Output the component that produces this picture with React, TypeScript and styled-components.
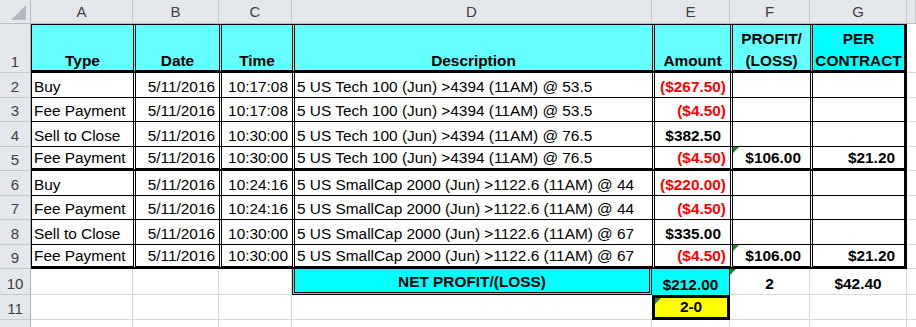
import * as React from "react";
import styled, { createGlobalStyle } from "styled-components";

type Edge = "thin" | "double" | "thick" | "grid" | "none";
type Align = "left" | "right" | "center";

const GlobalStyle = createGlobalStyle`
  html, body {
    margin: 0;
    padding: 0;
    background: #ffffff;
  }
  body {
    font-family: "Liberation Sans", Arial, sans-serif;
    overflow: hidden;
  }
`;

const edge = (b?: Edge) => {
  switch (b) {
    case "thin":
      return "1px solid #000000";
    case "double":
      return "3px double #000000";
    case "thick":
      return "3px solid #000000";
    case "grid":
      return "1px solid #d9d9d9";
    default:
      return "none";
  }
};

const Sheet = styled.div`
  display: grid;
  grid-template-columns: 31px 102px 86px 73px 360px 78px 80px 97px 1fr;
  grid-template-rows: 24px 49px 25px 24px 25px 24px 25px 24px 25px 24px 26px 25px 25px;
  width: 916px;
  height: 327px;
  overflow: hidden;
`;

const Corner = styled.div`
  box-sizing: border-box;
  background: #e4e7eb;
  border-right: 1px solid #b9bdc3;
  border-bottom: 1px solid #b9bdc3;
  display: flex;
`;

const ColHead = styled.div`
  box-sizing: border-box;
  background: #e4e7eb;
  border-right: 1px solid #c3c7cc;
  border-bottom: 1px solid #b3b8be;
  color: #3f3f3f;
  font-size: 15px;
  display: flex;
  align-items: center;
  justify-content: center;
`;

const RowHead = styled.div`
  box-sizing: border-box;
  background: #e4e7eb;
  border-right: 1px solid #a9aeb5;
  border-bottom: 1px solid #c6cacf;
  color: #3f3f3f;
  font-size: 15px;
  line-height: 20px;
  display: flex;
  align-items: flex-end;
  justify-content: center;
`;

interface CellProps {
  $fill?: string;
  $left?: Edge;
  $right?: Edge;
  $top?: Edge;
  $bottom?: Edge;
  $align?: Align;
  $bold?: boolean;
  $red?: boolean;
  $paren?: boolean;
  $head?: boolean;
}

const Cell = styled.div<CellProps>`
  position: relative;
  box-sizing: border-box;
  display: flex;
  align-items: flex-end;
  justify-content: ${(p) =>
    p.$align === "right" ? "flex-end" : p.$align === "center" ? "center" : "flex-start"};
  text-align: ${(p) => p.$align ?? "left"};
  background: ${(p) => p.$fill ?? "#ffffff"};
  border-left: ${(p) => edge(p.$left)};
  border-right: ${(p) => edge(p.$right)};
  border-top: ${(p) => edge(p.$top)};
  border-bottom: ${(p) => edge(p.$bottom)};
  padding: 0 ${(p) => (p.$align === "right" ? (p.$paren ? 9 : 4) : 2)}px 0 2px;
  font-size: 15.4px;
  line-height: ${(p) => (p.$head ? "22px" : "20px")};
  font-weight: ${(p) => (p.$bold ? 700 : 400)};
  color: ${(p) => (p.$red ? "#ff0000" : "#000000")};
  white-space: nowrap;
`;

const HeadLabel = styled.span`
  margin-bottom: -2px;
`;

const Flag = styled.span`
  position: absolute;
  top: 0;
  left: 0;
  width: 0;
  height: 0;
  border-top: 6px solid #1b8a1b;
  border-right: 6px solid transparent;
`;

interface Spec {
  text?: React.ReactNode;
  fill?: string;
  left?: Edge;
  right?: Edge;
  top?: Edge;
  bottom?: Edge;
  align?: Align;
  bold?: boolean;
  red?: boolean;
  paren?: boolean;
  head?: boolean;
  flag?: boolean;
}

const letters = ["A", "B", "C", "D", "E", "F", "G", ""];

const headers: React.ReactNode[] = [
  "Type",
  "Date",
  "Time",
  "Description",
  "Amount",
  <>
    PROFIT/
    <br />
    (LOSS)
  </>,
  <>
    PER
    <br />
    CONTRACT
  </>,
];

const tech = "5 US Tech 100 (Jun) >4394 (11AM) @ ";
const small = "5 US SmallCap 2000 (Jun) >1122.6 (11AM) @ ";

const trades: string[][] = [
  ["Buy", "5/11/2016", "10:17:08", tech + "53.5", "($267.50)", "", ""],
  ["Fee Payment", "5/11/2016", "10:17:08", tech + "53.5", "($4.50)", "", ""],
  ["Sell to Close", "5/11/2016", "10:30:00", tech + "76.5", "$382.50", "", ""],
  ["Fee Payment", "5/11/2016", "10:30:00", tech + "76.5", "($4.50)", "$106.00", "$21.20"],
  ["Buy", "5/11/2016", "10:24:16", small + "44", "($220.00)", "", ""],
  ["Fee Payment", "5/11/2016", "10:24:16", small + "44", "($4.50)", "", ""],
  ["Sell to Close", "5/11/2016", "10:30:00", small + "67", "$335.00", "", ""],
  ["Fee Payment", "5/11/2016", "10:30:00", small + "67", "($4.50)", "$106.00", "$21.20"],
];

const alignFor: Align[] = ["left", "right", "right", "left", "right", "right", "right"];

function headerRow(): Spec[] {
  const cells: Spec[] = headers.map((h, i) => ({
    text: <HeadLabel>{h}</HeadLabel>,
    fill: i === 6 ? "#00ffff" : "#66ffff",
    left: i === 0 ? "thin" : "double",
    right: i === 6 ? "thick" : "none",
    top: "thin",
    bottom: "thick",
    align: "center",
    bold: true,
    head: true,
  }));
  cells.push({ bottom: "grid" });
  return cells;
}

function tradeRow(row: string[], idx: number): Spec[] {
  const closing = idx === 3 || idx === 7;
  const cells: Spec[] = row.map((v, i) => ({
    text: v,
    left: i === 0 ? "thin" : "double",
    right: i === 6 ? "thick" : "none",
    bottom: closing ? "thick" : "thin",
    align: alignFor[i],
    bold: i >= 4,
    red: v.startsWith("("),
    paren: i >= 4 && v.startsWith("$"),
    flag: i === 5 && v !== "",
  }));
  cells.push({ bottom: "grid" });
  return cells;
}

const grid: Spec = { right: "grid", bottom: "grid" };

const totalRow: Spec[] = [
  grid,
  grid,
  grid,
  {
    text: "NET PROFIT/(LOSS)",
    fill: "#00ffff",
    left: "double",
    right: "double",
    bottom: "double",
    align: "center",
    bold: true,
  },
  { text: "$212.00", fill: "#00ffff", right: "thin", align: "center", bold: true },
  { text: "2", align: "center", bold: true, right: "grid", bottom: "grid", flag: true },
  { text: "$42.40", align: "center", bold: true, right: "grid", bottom: "grid" },
  { bottom: "grid" },
];

const scoreRow: Spec[] = [
  grid,
  grid,
  grid,
  { bottom: "grid" },
  {
    text: "2-0",
    fill: "#ffff00",
    left: "thick",
    right: "thick",
    top: "thick",
    bottom: "thick",
    align: "center",
    bold: true,
    flag: true,
  },
  grid,
  grid,
  { bottom: "grid" },
];

const emptyRow: Spec[] = [grid, grid, grid, grid, grid, grid, grid, { bottom: "grid" }];

const rows: Spec[][] = [
  headerRow(),
  ...trades.map(tradeRow),
  totalRow,
  scoreRow,
  emptyRow,
];

export default function App() {
  return (
    <>
      <GlobalStyle />
      <Sheet>
        <Corner>
          <svg width="30" height="23" viewBox="0 0 30 23">
            <polygon points="11,20 26,20 26,5" fill="#b5b9bf" />
          </svg>
        </Corner>
        {letters.map((l, i) => (
          <ColHead key={`c${i}`}>{l}</ColHead>
        ))}
        {rows.map((row, r) => (
          <React.Fragment key={`r${r}`}>
            {/* the last row is only partly in view, its number falls below the edge */}
            <RowHead>{r < rows.length - 1 ? r + 1 : ""}</RowHead>
            {row.map((c, i) => (
              <Cell
                key={`r${r}c${i}`}
                $fill={c.fill}
                $left={c.left}
                $right={c.right}
                $top={c.top}
                $bottom={c.bottom}
                $align={c.align}
                $bold={c.bold}
                $red={c.red}
                $paren={c.paren}
                $head={c.head}
              >
                {c.flag && <Flag />}
                {c.text}
              </Cell>
            ))}
          </React.Fragment>
        ))}
      </Sheet>
    </>
  );
}
